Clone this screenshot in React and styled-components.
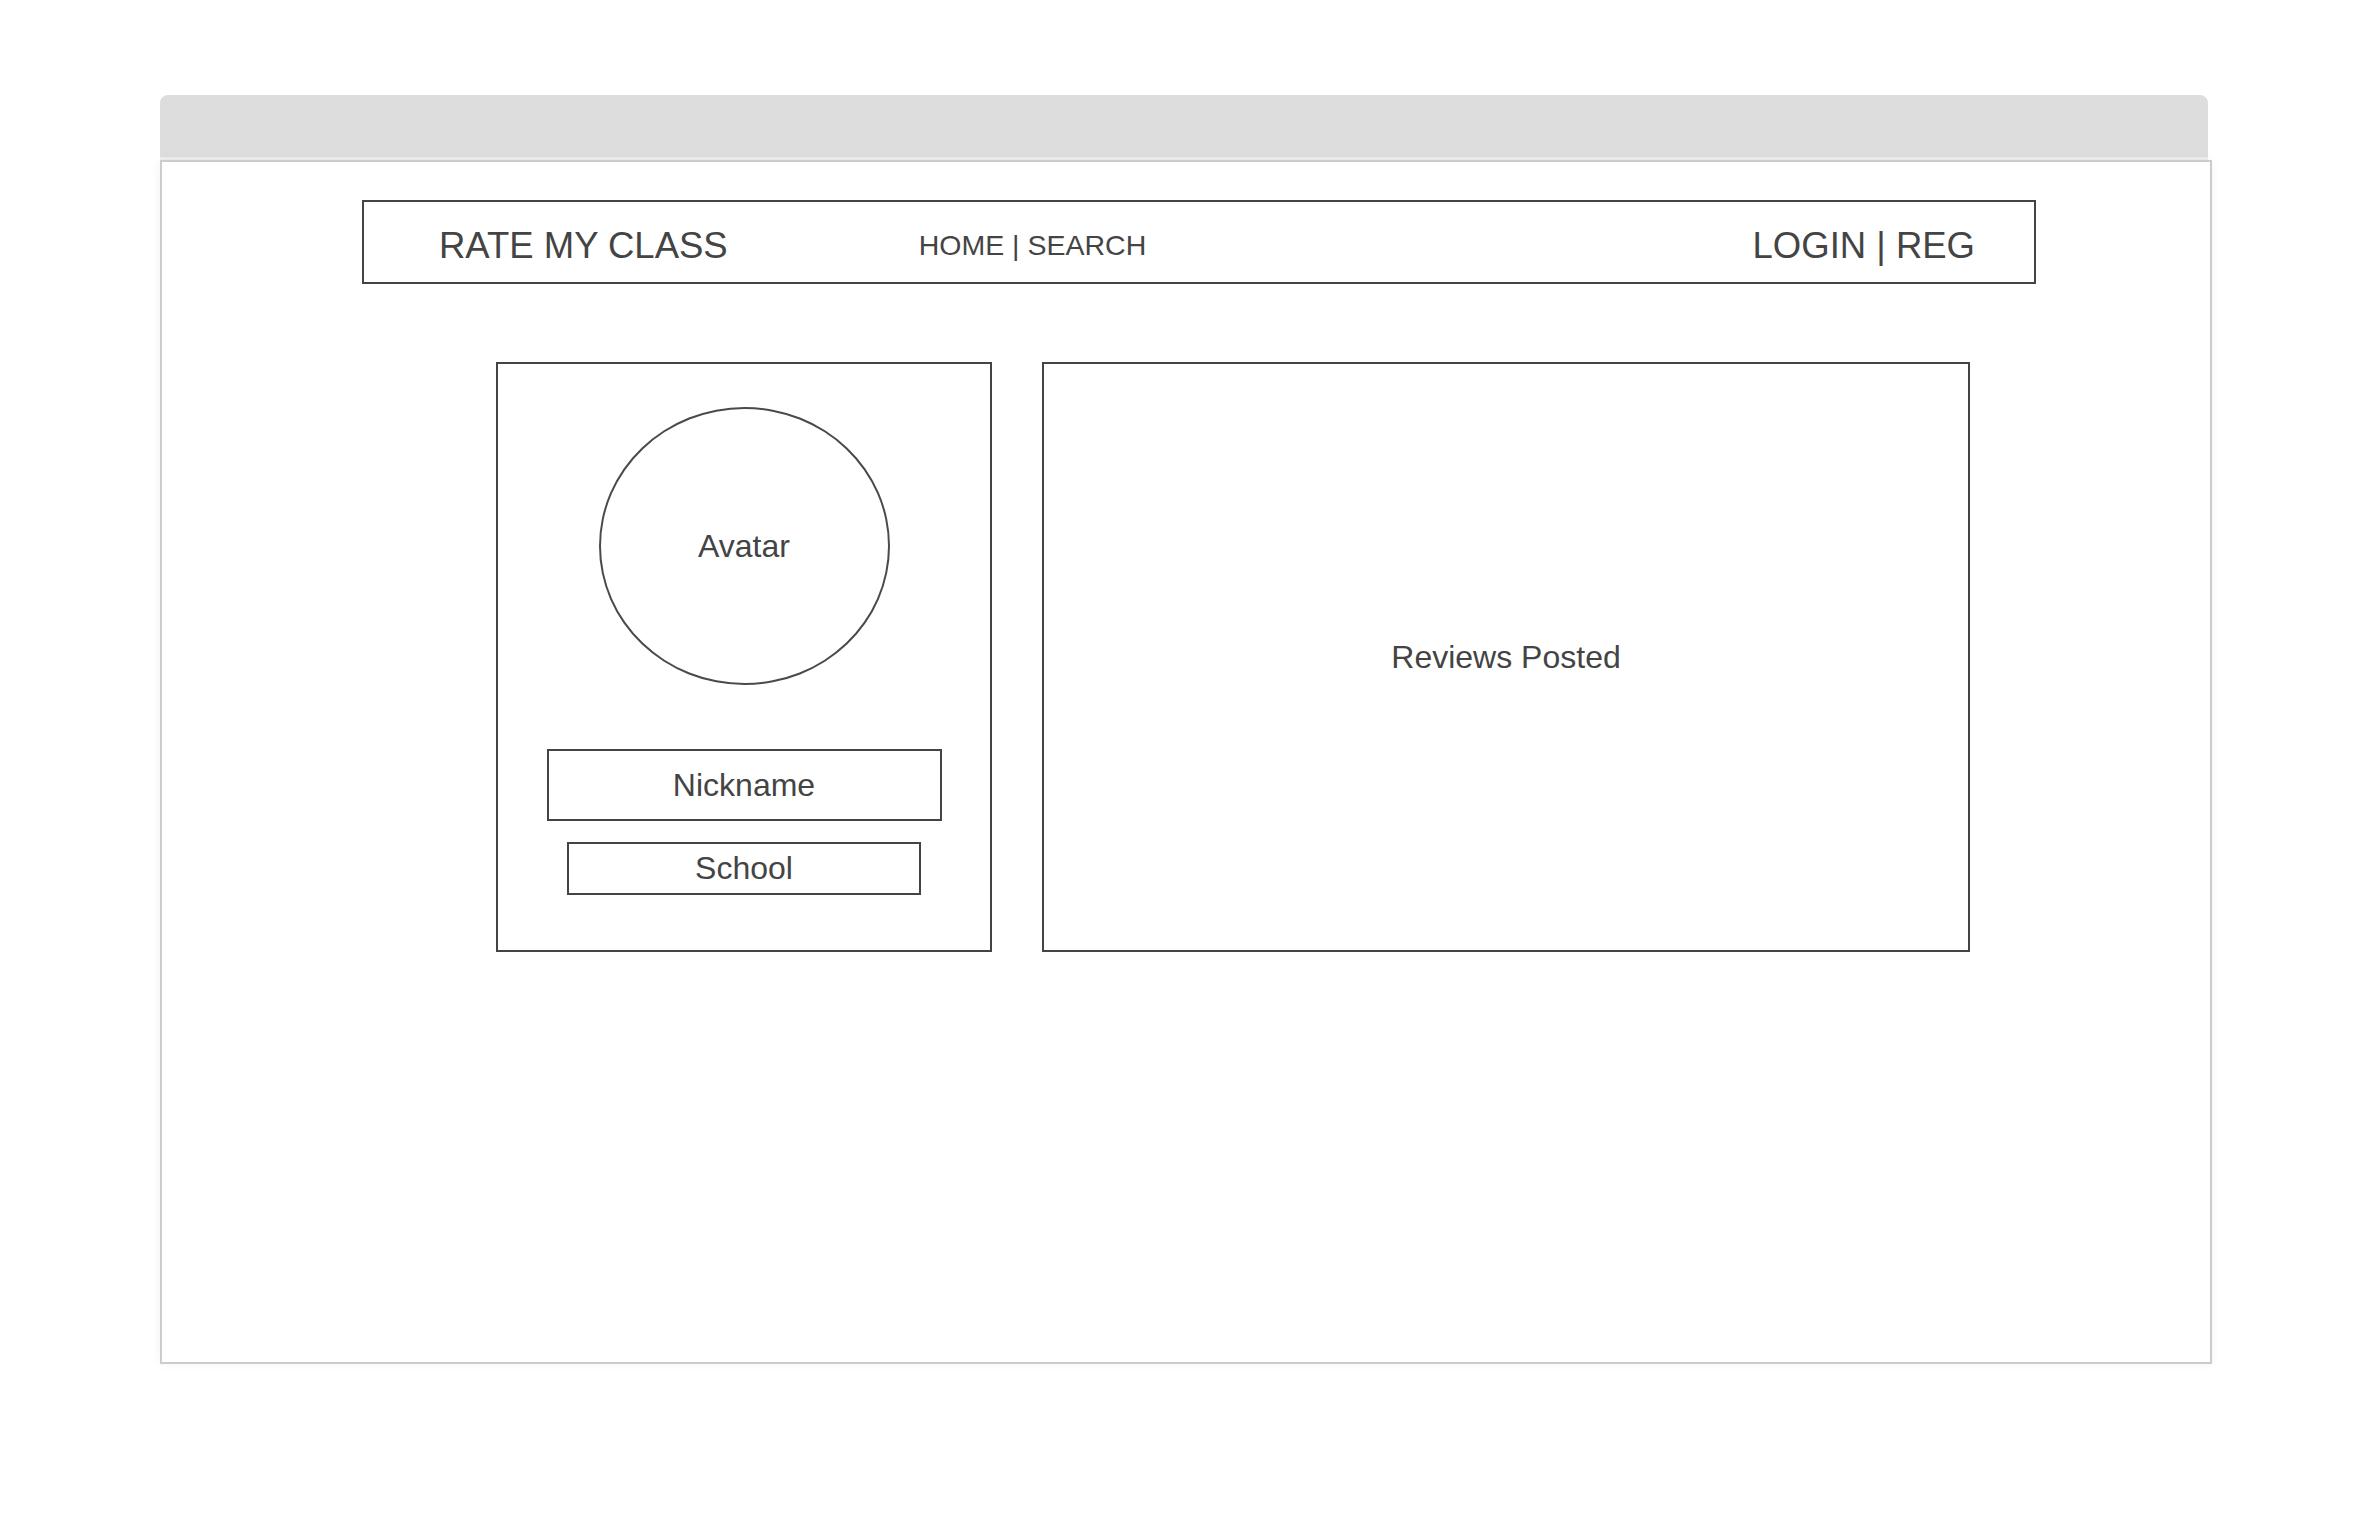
import React from "react";
import styled, { createGlobalStyle } from "styled-components";

const GlobalStyle = createGlobalStyle`
  html, body {
    margin: 0;
    padding: 0;
    background: #ffffff;
  }
  body {
    font-family: "Liberation Sans", Arial, sans-serif;
    color: #444444;
  }
  * {
    box-sizing: border-box;
  }
`;

const App = () => {
  return (
    <>
      <GlobalStyle />
      <Page>
        <Frame>
          <TitleBar />
          <Window>
            <Navbar>
              <Logo>RATE MY CLASS</Logo>
              <NavLinks>HOME | SEARCH</NavLinks>
              <Auth>LOGIN | REG</Auth>
            </Navbar>

            <ContentRow>
              <ProfileCard>
                <Avatar>Avatar</Avatar>
                <Field $width={395} $height={72}>Nickname</Field>
                <Field $width={354} $height={53} $gap={21}>
                  School
                </Field>
              </ProfileCard>
              <ReviewsCard>Reviews Posted</ReviewsCard>
            </ContentRow>
          </Window>
        </Frame>
      </Page>
    </>
  );
};

const Page = styled.div`
  padding: 95px 0 0 160px;
  min-height: 1520px;
`;

const Frame = styled.div`
  width: 2052px;
`;

const TitleBar = styled.div`
  width: 2048px;
  height: 65px;
  background-color: #dddddd;
  border-radius: 8px 8px 0 0;
  border-bottom: 3px solid #eeeeee;
`;

const Window = styled.div`
  height: 1204px;
  background-color: #ffffff;
  border: 2px solid #cccccc;
  box-shadow: 0 0 10px rgba(0, 0, 0, 0.05);
  padding: 38px 0 0 200px;
`;

const Navbar = styled.div`
  width: 1674px;
  height: 84px;
  border: 2px solid #444444;
  display: flex;
  align-items: center;
  padding: 8px 59px 0 75px;
`;

const Logo = styled.div`
  font-size: 36.5px;
  color: #444444;
`;

const NavLinks = styled.div`
  font-size: 28.5px;
  color: #444444;
  margin-left: 191px;
  margin-bottom: 2px;
`;

const Auth = styled.div`
  font-size: 36.5px;
  color: #444444;
  margin-left: auto;
`;

const ContentRow = styled.div`
  display: flex;
  gap: 50px;
  margin: 78px 0 0 134px;
`;

const ProfileCard = styled.div`
  width: 496px;
  height: 590px;
  border: 2px solid #444444;
  display: flex;
  flex-direction: column;
  align-items: center;
  padding-top: 43px;
`;

const Avatar = styled.div`
  width: 291px;
  height: 278px;
  border: 2px solid #4a4a4a;
  border-radius: 50%;
  display: flex;
  align-items: center;
  justify-content: center;
  font-size: 32px;
  color: #444444;
`;

const Field = styled.div`
  width: ${(p) => p.$width}px;
  height: ${(p) => p.$height}px;
  margin-top: ${(p) => p.$gap ?? 64}px;
  border: 2px solid #444444;
  display: flex;
  align-items: center;
  justify-content: center;
  font-size: 32px;
  color: #444444;
`;

const ReviewsCard = styled.div`
  width: 928px;
  height: 590px;
  border: 2px solid #444444;
  display: flex;
  align-items: center;
  justify-content: center;
  font-size: 32px;
  color: #444444;
`;

export default App;
